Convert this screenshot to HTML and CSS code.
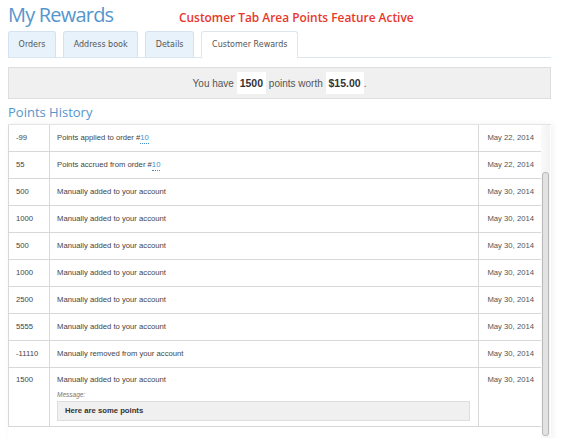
FILE: index.html
```html
<!DOCTYPE html>
<html>
<head>
<meta charset="utf-8">
<link rel="stylesheet" href="styles.css">
</head>
<body>
<div class="page">
  <div class="header">
    <h1 class="title">My Rewards</h1>
    <span class="notice">Customer Tab Area Points Feature Active</span>
  </div>
  <ul class="tabs">
    <li class="tab">Orders</li>
    <li class="tab">Address book</li>
    <li class="tab">Details</li>
    <li class="tab active">Customer Rewards</li>
  </ul>
  <div class="balance"><span>You have <b class="hl">1500</b> points worth <b class="hl">$15.00</b>.</span></div>
  <h2 class="subtitle">Points History</h2>
  <div class="scroller">
    <div class="history">
      <div class="row"><div class="cell pts">-99</div><div class="cell desc">Points applied to order #<a class="lnk">10</a></div><div class="cell date">May 22, 2014</div></div>
      <div class="row"><div class="cell pts">55</div><div class="cell desc">Points accrued from order #<a class="lnk">10</a></div><div class="cell date">May 22, 2014</div></div>
      <div class="row"><div class="cell pts">500</div><div class="cell desc">Manually added to your account</div><div class="cell date">May 30, 2014</div></div>
      <div class="row"><div class="cell pts">1000</div><div class="cell desc">Manually added to your account</div><div class="cell date">May 30, 2014</div></div>
      <div class="row"><div class="cell pts">500</div><div class="cell desc">Manually added to your account</div><div class="cell date">May 30, 2014</div></div>
      <div class="row"><div class="cell pts">1000</div><div class="cell desc">Manually added to your account</div><div class="cell date">May 30, 2014</div></div>
      <div class="row"><div class="cell pts">2500</div><div class="cell desc">Manually added to your account</div><div class="cell date">May 30, 2014</div></div>
      <div class="row"><div class="cell pts">5555</div><div class="cell desc">Manually added to your account</div><div class="cell date">May 30, 2014</div></div>
      <div class="row"><div class="cell pts">-11110</div><div class="cell desc">Manually removed from your account</div><div class="cell date">May 30, 2014</div></div>
      <div class="row tall"><div class="cell pts">1500</div><div class="cell desc"><div>Manually added to your account</div>
        <div class="msg-label">Message:</div>
        <div class="msg">Here are some points</div></div><div class="cell date">May 30, 2014</div></div>
    </div>
    <div class="track"><div class="thumb"></div></div>
  </div>
</div>
</body>
</html>
```
FILE: styles.css
```css
html, body {
  margin: 0;
  padding: 0;
  overflow: hidden;
  background: #fff;
}
.page {
  width: 543px;
  padding: 0 10px 0 8px;
  height: 438px;
  overflow: hidden;
}
.header {
  display: flex;
  align-items: baseline;
  height: 31px;
}
.title {
  margin: 0;
  font-family: "Open Sans", sans-serif;
  font-weight: 400;
  font-size: 20px;
  line-height: 30px;
  color: #5596cc;
  letter-spacing: -0.8px;
  width: 171px;
}
.notice {
  font-family: "Open Sans", sans-serif;
  font-weight: 600;
  font-size: 11.9px;
  color: #e8372b;
}
.tabs {
  list-style: none;
  margin: 0;
  padding: 0;
  display: flex;
  gap: 7px;
  border-bottom: 1px solid #dbe6ee;
  height: 26px;
}
.tab {
  font-family: "DejaVu Sans", sans-serif;
  font-size: 8px;
  color: #555;
  background: #e8f2fa;
  border: 1px solid #d3e2ee;
  border-bottom: none;
  border-radius: 3px 3px 0 0;
  padding: 0 9.6px;
  line-height: 25px;
}
.tab.active {
  background: #fff;
  border-color: #dbe6ee;
  height: 26px;
  padding: 0 10px;
}
.balance {
  margin-top: 9px;
  height: 30px;
  background: #f0f0f0;
  border: 1px solid #dedede;
  font-family: "Liberation Sans", sans-serif;
  font-size: 10px;
  color: #555;
  display: flex;
  align-items: center;
  justify-content: center;
}
.hl {
  background: #fff;
  color: #333;
  padding: 5px 3px;
  font-size: 10.5px;
}
.subtitle {
  margin: 5px 0 0;
  font-family: "Open Sans", sans-serif;
  font-weight: 400;
  font-size: 13px;
  line-height: 17px;
  color: #5596cc;
}
.scroller {
  margin-top: 3px;
  display: flex;
  align-items: flex-start;
  box-shadow: 2px 0 6px rgba(0,0,0,0.06);
  border-top: 1px solid #e4e4e4;
  height: 320px;
}
.history {
  width: 533px;
  flex: none;
  font-family: "Liberation Sans", sans-serif;
  font-size: 7.7px;
  line-height: 10px;
  color: #444;
}
.row {
  display: grid;
  grid-template-columns: 41px 429px 63px;
  height: 26px;
  border-left: 1px solid #d8d8d8;
  border-bottom: 1px solid #d8d8d8;
}
.cell {
  border-right: 1px solid #d8d8d8;
  padding: 0 7px;
  display: flex;
  align-items: center;
  white-space: nowrap;
}
.date { justify-content: flex-end; color: #555; }
.row.tall { height: 58px; }
.tall .cell { align-items: flex-start; padding-top: 7px; }
.tall .desc { flex-direction: column; align-items: stretch; padding-right: 8px; }
.lnk {
  color: #3d8fd0;
  border-bottom: 1px dotted #3d8fd0;
}
.msg-label {
  font-style: italic;
  font-size: 6.5px;
  color: #777;
  margin-top: 5px;
}
.msg {
  margin-top: 1px;
  background: #f0f0f0;
  border: 1px solid #dedede;
  font-weight: bold;
  color: #333;
  padding: 4px 7px;
}
.track {
  width: 9px;
  height: 100%;
  flex: none;
  background: linear-gradient(to right, #fafafa, #f2f2f2);
}
.thumb {
  margin: 47px 1px 0 1px;
  height: 262px;
  background: #e2e2e2;
  border: 1px solid #b8b8b8;
  border-radius: 3px;
}
```
